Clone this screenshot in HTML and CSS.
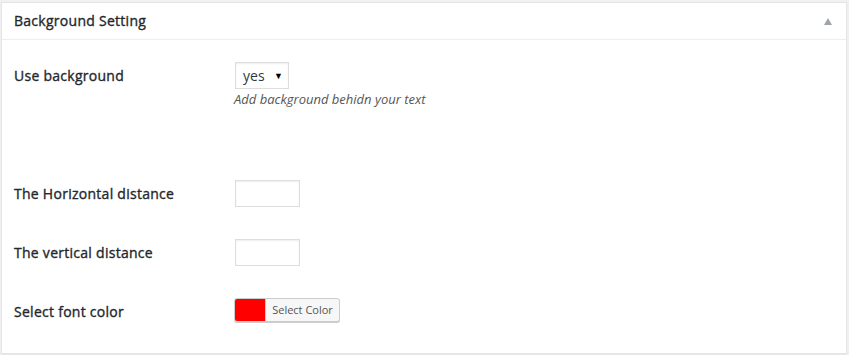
FILE: index.html
```html
<!DOCTYPE html>
<html>
<head>
  <title>Background Setting</title>
  <link rel="stylesheet" href="styles.css">
</head>
<body>
  <div class="postbox">
    <div class="hndle">
      <h2>Background Setting</h2>
      <span class="toggle-arrow"></span>
    </div>

    <div class="inside">
      <div class="row row-first">
        <div class="row-label">Use background</div>
        <div class="row-field">
          <div class="fake-select">yes <span class="caret">&#9660;</span></div>
          <p class="description">Add background behidn your text</p>
        </div>
      </div>

      <div class="row">
        <div class="row-label">The Horizontal distance</div>
        <div class="row-field">
          <input type="text" class="small-text">
        </div>
      </div>

      <div class="row">
        <div class="row-label">The vertical distance</div>
        <div class="row-field">
          <input type="text" class="small-text">
        </div>
      </div>

      <div class="row">
        <div class="row-label">Select font color</div>
        <div class="row-field">
          <button type="button" class="color-result">
            <span class="swatch"></span>
            <span class="color-text">Select Color</span>
          </button>
        </div>
      </div>
    </div>
  </div>
</body>
</html>
```

FILE: styles.css
```css
/* metabox look */
body {
  margin: 0;
  background-color: #f1f1f1;
  font-family: "Open Sans", "Liberation Sans", sans-serif;
  font-size: 14px;
  color: #23282d;
}

.postbox {
  margin: 2px 2px 1px 1px;
  height: 352px;
  box-sizing: border-box;
  background-color: #ffffff;
  border: 1px solid #e5e5e5;
  box-shadow: 0 1px 1px rgba(0, 0, 0, 0.04);
}

.hndle {
  display: flex;
  align-items: center;
  justify-content: space-between;
  padding: 8px 12px;
  border-bottom: 1px solid #eeeeee;
}

/* semibold look: regular weight with a thin stroke */
.hndle h2,
.row-label {
  font-weight: 400;
  letter-spacing: 0.27px;
  -webkit-text-stroke: 0.35px currentColor;
}

.hndle h2 {
  margin: 0;
  font-size: 14px;
  line-height: 20px;
}

.toggle-arrow {
  width: 0;
  height: 0;
  margin-right: 2px;
  border-left: 4px solid transparent;
  border-right: 4px solid transparent;
  border-bottom: 7px solid #a0a5aa;
}

.inside {
  padding: 0 12px;
}

.row {
  display: flex;
  height: 59px;
}

.row-first {
  height: 118px;
  margin-top: 7px;
}

.row-label {
  flex-shrink: 0;
  width: 221px;
  padding-top: 20px;
  line-height: 18px;
}

.row-field {
  padding-top: 15px;
}

.fake-select {
  display: inline-flex;
  align-items: center;
  justify-content: space-between;
  box-sizing: border-box;
  width: 54px;
  height: 27px;
  padding: 0 5px 0 7px;
  border: 1px solid #dddddd;
  box-shadow: inset 0 1px 2px rgba(0, 0, 0, 0.07);
  font-size: 14px;
  color: #32373c;
}

.caret {
  font-size: 9px;
  color: #000000;
}

.description {
  margin: 1px 0 0 -1px;
  font-size: 13px;
  font-style: italic;
  color: #555555;
}

.small-text {
  display: block;
  box-sizing: border-box;
  width: 65px;
  height: 27px;
  margin: 0;
  border: 1px solid #dddddd;
  box-shadow: inset 0 1px 2px rgba(0, 0, 0, 0.07);
  background-color: #ffffff;
}

.color-result {
  display: flex;
  align-items: stretch;
  box-sizing: border-box;
  width: 106px;
  height: 24px;
  margin: 0 0 0 -1px;
  padding: 0;
  border: 1px solid #cccccc;
  border-radius: 3px;
  background-color: #f7f7f7;
  box-shadow: 0 1px 0 #cccccc;
  overflow: hidden;
  cursor: pointer;
}

.swatch {
  width: 30px;
  background-color: #ff0000;
}

.color-text {
  flex-grow: 1;
  border-left: 1px solid #cccccc;
  font-family: "Open Sans", "Liberation Sans", sans-serif;
  font-size: 11px;
  line-height: 22px;
  color: #555555;
}
```
